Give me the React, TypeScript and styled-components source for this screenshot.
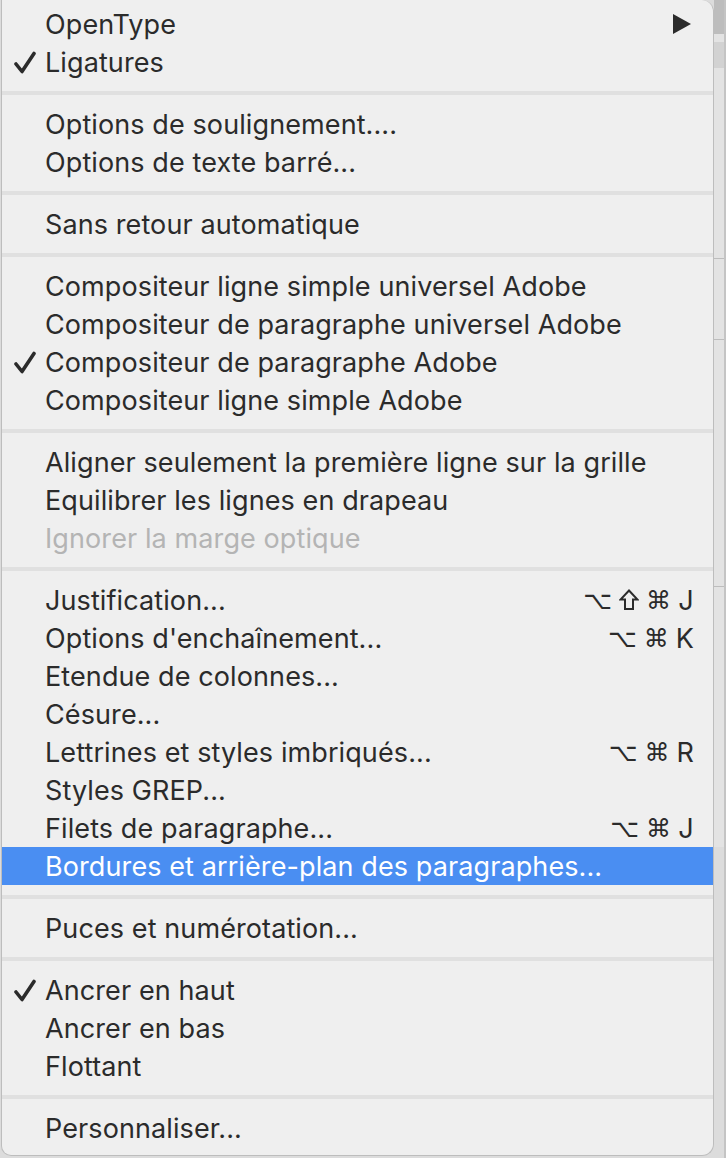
import { FC } from "react"
import styled, { createGlobalStyle } from "styled-components"

interface MenuEntry {
  label: string
  checked?: boolean
  submenu?: boolean
  shortcut?: string[]
  disabled?: boolean
  active?: boolean
}

const sections: MenuEntry[][] = [
  [{ label: "OpenType", submenu: true }, { label: "Ligatures", checked: true }],
  [
    { label: "Options de soulignement...." },
    { label: "Options de texte barré..." },
  ],
  [{ label: "Sans retour automatique" }],
  [
    { label: "Compositeur ligne simple universel Adobe" },
    { label: "Compositeur de paragraphe universel Adobe" },
    { label: "Compositeur de paragraphe Adobe", checked: true },
    { label: "Compositeur ligne simple Adobe" },
  ],
  [
    { label: "Aligner seulement la première ligne sur la grille" },
    { label: "Equilibrer les lignes en drapeau" },
    { label: "Ignorer la marge optique", disabled: true },
  ],
  [
    { label: "Justification...", shortcut: ["⌥", "⇧", "⌘", "J"] },
    { label: "Options d'enchaînement...", shortcut: ["⌥", "⌘", "K"] },
    { label: "Etendue de colonnes..." },
    { label: "Césure..." },
    { label: "Lettrines et styles imbriqués...", shortcut: ["⌥", "⌘", "R"] },
    { label: "Styles GREP..." },
    { label: "Filets de paragraphe...", shortcut: ["⌥", "⌘", "J"] },
    { label: "Bordures et arrière-plan des paragraphes...", active: true },
  ],
  [{ label: "Puces et numérotation..." }],
  [
    { label: "Ancrer en haut", checked: true },
    { label: "Ancrer en bas" },
    { label: "Flottant" },
  ],
  [{ label: "Personnaliser..." }],
]

const CheckIcon: FC = () => (
  <svg width="22" height="23" viewBox="0 0 22 23">
    <path
      d="M2 13 L8 20.5 L20 2.5"
      fill="none"
      stroke="currentColor"
      strokeWidth="3.6"
      strokeLinecap="round"
      strokeLinejoin="round"
    />
  </svg>
)

const SubmenuArrow: FC = () => (
  <svg width="18" height="20" viewBox="0 0 18 20">
    <path d="M0 0 L18 10 L0 20 Z" fill="currentColor" />
  </svg>
)

// the shift key, drawn as a hollow arrow like the mac menu glyph
const ShiftIcon: FC = () => (
  <svg width="20" height="22" viewBox="0 0 20 22">
    <path
      d="M10 1.5 L18.5 10.5 L14 10.5 L14 20 L6 20 L6 10.5 L1.5 10.5 Z"
      fill="none"
      stroke="currentColor"
      strokeWidth="2"
      strokeLinejoin="miter"
    />
  </svg>
)

const App: FC = () => {
  return (
    <>
      <GlobalStyle />
      <Backdrop>
        <Menu>
          {sections.map((section, i) => (
            <Section key={i}>
              {i > 0 && <Separator />}
              {section.map((item) => (
                <Row
                  key={item.label}
                  $active={item.active}
                  $disabled={item.disabled}>
                  <CheckSlot>{item.checked && <CheckIcon />}</CheckSlot>
                  <Label>{item.label}</Label>
                  {item.shortcut && (
                    <Shortcut>
                      {item.shortcut.map((k, j) =>
                        k === "⇧" ? (
                          <ShiftIcon key={j} />
                        ) : (
                          <Key key={j} $symbol={!/[A-Z]/.test(k)}>
                            {k}
                          </Key>
                        ),
                      )}
                    </Shortcut>
                  )}
                  {item.submenu && (
                    <ArrowSlot>
                      <SubmenuArrow />
                    </ArrowSlot>
                  )}
                </Row>
              ))}
            </Section>
          ))}
        </Menu>
        <SideStrip>
          <StripBand $h={34} $dark />
          <StripBand $h={8} />
          <StripBand $h={26} $mid />
          <StripBand $h={190} />
          <StripBand $h={1} $dark />
          <StripBand $h={80} />
          <StripBand $h={1} $dark />
          <StripBand $h={246} />
          <StripBand $h={1} $dark />
          <StripBand $h={260} />
        </SideStrip>
      </Backdrop>
    </>
  )
}

export default App

const GlobalStyle = createGlobalStyle`
  html, body {
    margin: 0;
    padding: 0;
    background: #d9d9d9;
  }
`

const Backdrop = styled.div`
  display: flex;
  width: 726px;
  height: 1158px;
  overflow: hidden;
  background: #dcdcdc;
`

const Menu = styled.div`
  width: 713px;
  height: 1156px;
  margin-left: 1px;
  padding: 5px 0 8px;
  box-sizing: border-box;
  background: #efefef;
  border: 1px solid #bdbdbd;
  border-top: none;
  border-radius: 0 12px 12px 10px;
  font-family: Inter, "Liberation Sans", sans-serif;
  font-size: 27px;
  color: #2b2b2b;
`

const Section = styled.div`
  display: flex;
  flex-direction: column;
`

const Separator = styled.div`
  height: 24px;
  display: flex;
  align-items: center;

  &::before {
    content: "";
    flex: 1;
    height: 4px;
    background: #e0e0e0;
  }
`

const Row = styled.div<{ $active?: boolean; $disabled?: boolean }>`
  display: flex;
  align-items: center;
  height: 38px;
  padding-right: 19px;
  background: ${({ $active }) => ($active ? "#4a8ef2" : "transparent")};
  color: ${({ $active, $disabled }) =>
    $active ? "#ffffff" : $disabled ? "#b4b4b4" : "#2b2b2b"};
`

const CheckSlot = styled.span`
  width: 43px;
  display: flex;
  justify-content: flex-end;
  padding-right: 9px;
  box-sizing: border-box;
  color: #2b2b2b;
`

const Label = styled.span`
  flex: 1;
  white-space: nowrap;
  letter-spacing: 0.1px;
`

const Shortcut = styled.span`
  display: flex;
  align-items: center;
  gap: 7px;
`

const Key = styled.span<{ $symbol?: boolean }>`
  font-family: ${({ $symbol }) =>
    $symbol ? '"DejaVu Sans", sans-serif' : 'Inter, "Liberation Sans", sans-serif'};
  font-size: ${({ $symbol }) => ($symbol ? "25px" : "27px")};
  line-height: 1;
  min-width: 16px;
  text-align: center;
`

const ArrowSlot = styled.span`
  display: flex;
  align-items: center;
  margin-right: 3px;
  color: #2b2b2b;
`

const SideStrip = styled.div`
  flex: 1;
  display: flex;
  flex-direction: column;
  border-right: 2px solid #c4c4c4;
`

const StripBand = styled.div<{ $h: number; $dark?: boolean; $mid?: boolean }>`
  height: ${({ $h }) => $h}px;
  background: ${({ $dark, $mid }) =>
    $dark ? "#bdbdbd" : $mid ? "#d2d2d2" : "#e3e3e3"};
`
